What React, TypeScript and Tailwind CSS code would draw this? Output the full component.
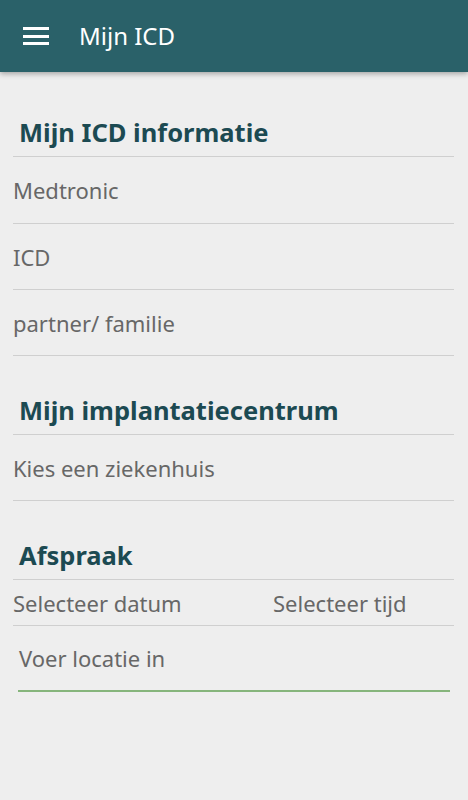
import React from "react";

const Row = ({ children, h }: { children: React.ReactNode; h: string }) => (
  <div className={`${h} flex items-center pt-[1px] border-b border-[#cfcfcf] text-[22px] text-[#676767]`}>
    {children}
  </div>
);

export default function App() {
  return (
    <div
      className="w-[468px] h-[800px] bg-[#eeeeee] overflow-hidden"
      style={{ fontFamily: '"Noto Sans", "Open Sans", sans-serif' }}
    >
      <header className="relative h-[72px] bg-[#2a6169] flex items-center shadow-[0_2px_5px_rgba(0,0,0,0.3)]">
        <div className="ml-[23px] w-[26px] flex flex-col gap-[4.5px]">
          <span className="block h-[3px] bg-white" />
          <span className="block h-[3px] bg-white" />
          <span className="block h-[3px] bg-white" />
        </div>
        <h1 className="ml-[30px] text-[24px] text-white leading-none">Mijn ICD</h1>
      </header>
      <main className="ml-[13px] w-[441px]">
        <div className="flex items-end h-[85px] pb-[11px] border-b border-[#cfcfcf]">
          <h2 className="pl-[6px] text-[25.5px] font-bold text-[#1c4a52] leading-none">Mijn ICD informatie</h2>
        </div>
        <Row h="h-[67px]">Medtronic</Row>
        <Row h="h-[66px]">ICD</Row>
        <Row h="h-[66px]">partner/ familie</Row>
        <div className="flex items-end h-[79px] pb-[11px] border-b border-[#cfcfcf]">
          <h2 className="pl-[6px] text-[25.5px] font-bold text-[#1c4a52] leading-none">Mijn implantatiecentrum</h2>
        </div>
        <Row h="h-[66px]">Kies een ziekenhuis</Row>
        <div className="flex items-end h-[79px] pb-[11px] border-b border-[#cfcfcf]">
          <h2 className="pl-[6px] text-[25.5px] font-bold text-[#1c4a52] leading-none">Afspraak</h2>
        </div>
        <div className="h-[46px] flex items-center pt-[2px] border-b border-[#cfcfcf] text-[22px] text-[#676767]">
          <span className="w-[260px]">Selecteer datum</span>
          <span>Selecteer tijd</span>
        </div>
        <div className="ml-[5px] mr-[4px] h-[66px] border-b-2 border-[#86b57c] flex items-center text-[22px] text-[#676767] pl-[1px]">
          Voer locatie in
        </div>
      </main>
    </div>
  );
}
